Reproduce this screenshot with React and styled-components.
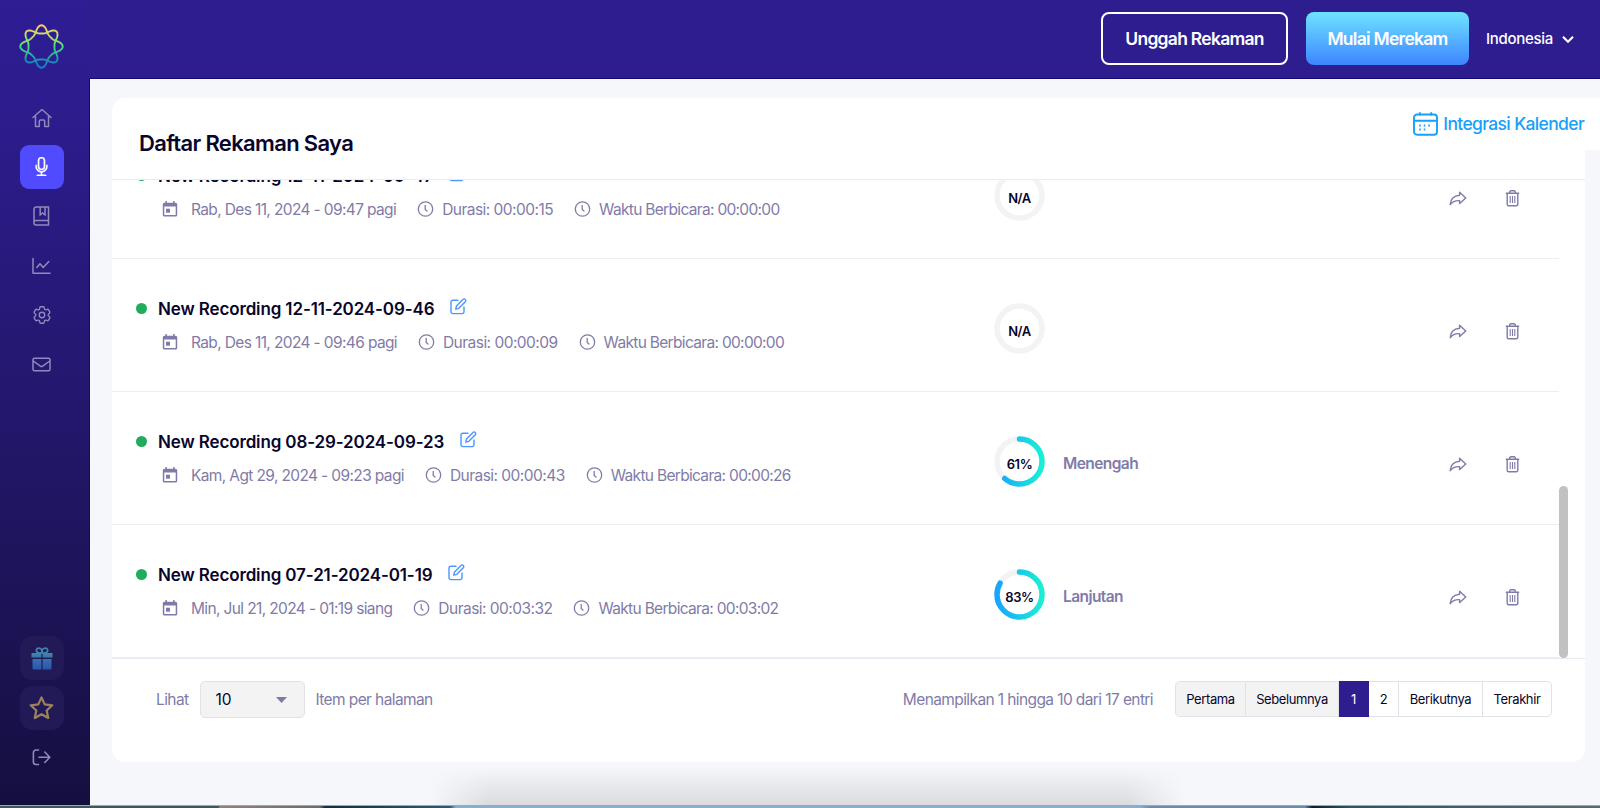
import styled, { createGlobalStyle } from "styled-components";
import { BsMic } from "react-icons/bs";
import { HiOutlineCog6Tooth } from "react-icons/hi2";

const GlobalStyle = createGlobalStyle`
  * {
    box-sizing: border-box;
  }
  body {
    margin: 0;
    overflow: hidden;
    font-family: Inter, "Liberation Sans", sans-serif;
    color: #08052b;
  }
`;

const recordings = [
  { name: "New Recording 12-11-2024-09-47", date: "Rab, Des 11, 2024 - 09:47 pagi", duration: "00:00:15", talk: "00:00:00", score: null },
  { name: "New Recording 12-11-2024-09-46", date: "Rab, Des 11, 2024 - 09:46 pagi", duration: "00:00:09", talk: "00:00:00", score: null },
  { name: "New Recording 08-29-2024-09-23", date: "Kam, Agt 29, 2024 - 09:23 pagi", duration: "00:00:43", talk: "00:00:26", score: 61, level: "Menengah" },
  { name: "New Recording 07-21-2024-01-19", date: "Min, Jul 21, 2024 - 01:19 siang", duration: "00:03:32", talk: "00:03:02", score: 83, level: "Lanjutan" },
];

// four-lobed closed wave around the logo centre, the second harmonic narrows the tips
const wave = (base, amp) => {
  let d = "";
  for (let i = 0; i <= 360; i += 3) {
    const t = (i * Math.PI) / 180;
    const r = base + amp * Math.cos(4 * t) + 0.9 * Math.cos(8 * t);
    d += `${i ? "L" : "M"}${(22.5 + r * Math.sin(t)).toFixed(2)} ${(22.5 - r * Math.cos(t)).toFixed(2)}`;
  }
  return d + "Z";
};

const Logo = () => (
  <svg width="45" height="45" viewBox="0 0 45 45" fill="none">
    <defs>
      <linearGradient id="logo" x1="0" y1="0" x2="0" y2="45" gradientUnits="userSpaceOnUse">
        <stop offset="0" stopColor="#ffc466" />
        <stop offset=".25" stopColor="#c3dc66" />
        <stop offset=".5" stopColor="#4bdc7c" />
        <stop offset=".8" stopColor="#1b8fb0" />
        <stop offset="1" stopColor="#0c7fd0" />
      </linearGradient>
    </defs>
    <g stroke="url(#logo)" strokeWidth="1.9">
      <path d={wave(16.2, 4.1)} />
      <path d={wave(16.2, -4.1)} />
    </g>
  </svg>
);

const HomeIcon = () => (
  <svg width="20" height="20" viewBox="0 0 20 20" fill="none" stroke="currentColor" strokeWidth="1.5" strokeLinecap="round" strokeLinejoin="round">
    <path d="M1 9.500l9-8 9 8M3.500 8v10.500h3.800v-5.300a1.200 1.200 0 0 1 1.200-1.200h3a1.200 1.200 0 0 1 1.200 1.200v5.300h3.800V8" />
  </svg>
);

const ChartIcon = () => (
  <svg width="19" height="18" viewBox="0 0 19 18" fill="none" stroke="currentColor" strokeWidth="1.5" strokeLinecap="round" strokeLinejoin="round">
    <path d="M1 1.500v14.800h17M4.800 10.500l3.200-3.800 3.200 3.800 5.600-6" />
  </svg>
);

const MailIcon = () => (
  <svg width="19" height="15" viewBox="0 0 19 15" fill="none" stroke="currentColor" strokeWidth="1.5" strokeLinejoin="round">
    <rect x="1" y="1.200" width="17" height="12.500" rx="1.500" />
    <path d="M1.200 4l7.200 5.200a2 2 0 0 0 2.200 0L17.800 4" />
  </svg>
);

const BookIcon = () => (
  <svg width="17" height="20" viewBox="0 0 17 20" fill="none" stroke="currentColor" strokeWidth="1.5">
    <path d="M15.500 1H3.200A2.200 2.200 0 0 0 1 3.200V17a2 2 0 0 0 2 2h12.500zM1 16.500a2 2 0 0 1 2-2h12.500M7.200 1v8l2.400-2 2.400 2V1" />
  </svg>
);

const GiftIcon = () => (
  <svg width="22" height="23" viewBox="0 0 22 23">
    <defs>
      <linearGradient id="gift" x1="0" y1="0" x2="0" y2="1">
        <stop offset="0" stopColor="#3f84ae" />
        <stop offset="1" stopColor="#2b53ae" />
      </linearGradient>
    </defs>
    <path d="M.5 6h21v4.600H11.600V6h-1.200v4.600H.5zM1.500 12h8.900v10.500H2.700a1.200 1.200 0 0 1-1.200-1.200zM11.600 12h8.900v9.300a1.200 1.200 0 0 1-1.200 1.200h-7.700z" fill="url(#gift)" />
    <path d="M10.800 6.200C6 6.400 5 4.700 5.400 3 6 .6 9.700.6 10.800 3.200L11 6.200l.2-3C12.300.6 16 .6 16.600 3c.4 1.700-.6 3.400-5.400 3.200" fill="none" stroke="#3f84ae" strokeWidth="1.8" />
  </svg>
);

const StarIcon = () => (
  <svg width="25" height="24" viewBox="0 0 25 24" fill="none" stroke="#9b835b" strokeWidth="2.2" strokeLinejoin="round">
    <path d="M12.500 1.400l3.200 7 7.600.9-5.600 5.200 1.500 7.500-6.700-3.700L5.800 22l1.500-7.500L1.700 9.300l7.600-.9z" />
  </svg>
);

const LogoutIcon = () => (
  <svg width="19" height="17" viewBox="0 0 19 17" fill="none" stroke="currentColor" strokeWidth="1.6" strokeLinecap="round" strokeLinejoin="round">
    <path d="M6.500 1H4a2.600 2.600 0 0 0-2.600 2.600v9.300A2.600 2.600 0 0 0 4 15.500h2.500M7 8.300h10.500M12.800 3l5 5.300-5 5.200" />
  </svg>
);

const EditIcon = () => (
  <svg width="17" height="17" viewBox="0 0 17 17" fill="none" stroke="#4a97ff" strokeWidth="1.4" strokeLinejoin="round" strokeLinecap="round">
    <path d="M8 2.300H2.800A1.800 1.800 0 0 0 1 4.100v9.700a1.800 1.800 0 0 0 1.800 1.800h9.400a1.800 1.800 0 0 0 1.800-1.800V9" />
    <path d="M5.800 11.200l.7-3.200L13 1.400a1.500 1.500 0 0 1 2.200 0l.1.100a1.500 1.500 0 0 1 0 2.200L8.800 10.300z" />
  </svg>
);

const DateIcon = () => (
  <svg width="16" height="17" viewBox="0 0 16 17" fill="#7f7ba9">
    <path fillRule="evenodd" d="M3.400 0h1.500v1.700h6.200V0h1.500v1.700h1A1.600 1.600 0 0 1 15.200 3.300v10.600a1.600 1.600 0 0 1-1.600 1.600H2.400A1.600 1.600 0 0 1 .8 13.900V3.300a1.600 1.600 0 0 1 1.600-1.600h1zM2.300 5.500V14h11.400V5.500z" />
    <path d="M4 7.700h4v4H4z" />
  </svg>
);

const ClockIcon = () => (
  <svg width="17" height="17" viewBox="0 0 17 17" fill="none" stroke="#7f7ba9" strokeWidth="1.3" strokeLinecap="round">
    <circle cx="8.500" cy="8" r="7.200" />
    <path d="M8.200 4.300v4.200l1.800 1.500" />
  </svg>
);

const ShareIcon = () => (
  <svg width="18" height="16" viewBox="0 0 18 16" fill="none" stroke="#7f7ba9" strokeWidth="1.4" strokeLinejoin="round">
    <path d="M10.600 1.300l6.200 5.600-6.200 5.600V9.600C6 9.400 3.500 10.300 1.200 13.700 1.500 8.500 4.500 4.800 10.600 4.300z" />
  </svg>
);

const TrashIcon = () => (
  <svg width="15" height="17" viewBox="0 0 15 17" fill="none" stroke="#7f7ba9" strokeWidth="1.4">
    <path d="M.8 3.200h13.400M4.700 3V2a1.200 1.200 0 0 1 1.200-1.200h3.200A1.200 1.200 0 0 1 10.300 2v1M2.200 3.200v11a1.600 1.600 0 0 0 1.600 1.600h7.400a1.600 1.600 0 0 0 1.600-1.600v-11" />
    <path d="M5.200 6v7M7.500 6v7M9.800 6v7" strokeWidth="1.1" />
  </svg>
);

const CalendarIcon = () => (
  <svg width="25" height="24" viewBox="0 0 25 24" fill="none" stroke="#17a0fb" strokeWidth="1.9">
    <rect x="1" y="2.500" width="23" height="20.300" rx="3" />
    <path d="M1 8.700h23M6.800.3v3.200M18.200.3v3.200" />
    <path d="M6.200 13.500h1.600M10.700 13.500h1.600M15.200 13.500h1.600M6.200 17.500h1.600M10.700 17.500h1.600" />
  </svg>
);

const Score = ({ value }) => {
  const length = 2 * Math.PI * 22.5;
  return (
    <Ring>
      <svg width="51" height="51" viewBox="0 0 51 51" fill="none" strokeWidth="5.5">
        <defs>
          <linearGradient id="score" x1="0" y1="0" x2="1" y2="0">
            <stop offset="0" stopColor="#17a5ff" />
            <stop offset="1" stopColor="#1beed6" />
          </linearGradient>
        </defs>
        <circle cx="25.500" cy="25.500" r="22.500" stroke="#f3f3f3" />
        {value && (
          <path
            d="M25.500 3a22.500 22.500 0 0 1 0 45a22.500 22.500 0 0 1 0-45"
            stroke="url(#score)"
            strokeLinecap="round"
            strokeDasharray={`${(length * value) / 100} ${length}`}
          />
        )}
      </svg>
      <span>{value ? `${value}%` : "N/A"}</span>
    </Ring>
  );
};

const Recording = ({ item }) => (
  <Row>
    <Info>
      <NameLine>
        <Dot />
        <Name>{item.name}</Name>
        <EditIcon />
      </NameLine>
      <Meta>
        <DateIcon />
        <MetaText $gap={13} $spacing={-0.63}>{item.date}</MetaText>
        <ClockIcon />
        <MetaText $gap={8} $spacing={-0.53}>Durasi: {item.duration}</MetaText>
        <ClockIcon />
        <MetaText $gap={8} $spacing={-0.68}>Waktu Berbicara: {item.talk}</MetaText>
      </Meta>
    </Info>
    <Score value={item.score} />
    <Level>{item.level}</Level>
    <Actions>
      <ShareIcon />
      <TrashIcon />
    </Actions>
  </Row>
);

const App = () => (
  <>
    <GlobalStyle />
    <Screen>
      <Window>
        <Sidebar>
          <LogoBox><Logo /></LogoBox>
          <Nav>
            <NavItem><HomeIcon /></NavItem>
            <NavItem $active><BsMic size={19} stroke="currentColor" strokeWidth={0.4} /></NavItem>
            <NavItem><BookIcon /></NavItem>
            <NavItem><ChartIcon /></NavItem>
            <NavItem><HiOutlineCog6Tooth size={22} /></NavItem>
            <NavItem><MailIcon /></NavItem>
          </Nav>
          <Nav>
            <NavItem $soft><GiftIcon /></NavItem>
            <NavItem $soft><StarIcon /></NavItem>
            <NavItem><LogoutIcon /></NavItem>
          </Nav>
        </Sidebar>
        <Main>
          <Header>
            <UploadButton>Unggah Rekaman</UploadButton>
            <RecordButton>Mulai Merekam</RecordButton>
            <Language>
              Indonesia
              <svg width="12" height="8" viewBox="0 0 12 8" fill="none" stroke="#fff" strokeWidth="2.2">
                <path d="M1 1.700l5 5 5-5" />
              </svg>
            </Language>
          </Header>
          <Content>
            <Card>
              <CardHead>
                <Title>Daftar Rekaman Saya</Title>
                <CalendarLink>
                  <CalendarIcon />
                  Integrasi Kalender
                </CalendarLink>
              </CardHead>
              <ListWrap>
                <List>
                  {recordings.map((item) => (
                    <Recording key={item.name} item={item} />
                  ))}
                </List>
                <Track><Thumb /></Track>
              </ListWrap>
              <Footer>
                <FootText>Lihat</FootText>
                <Select>
                  10
                  <svg width="11" height="6" viewBox="0 0 11 6" fill="#7f7ba9"><path d="M0 0h11L5.500 6z" /></svg>
                </Select>
                <FootText>Item per halaman</FootText>
                <Total>Menampilkan 1 hingga 10 dari 17 entri</Total>
                <Pages>
                  <Page $width={71} $disabled>Pertama</Page>
                  <Page $width={93} $disabled>Sebelumnya</Page>
                  <Page $width={30} $current>1</Page>
                  <Page $width={30}>2</Page>
                  <Page $width={84}>Berikutnya</Page>
                  <Page $width={69}>Terakhir</Page>
                </Pages>
              </Footer>
            </Card>
            <DockShadow />
          </Content>
        </Main>
      </Window>
      <Desktop />
    </Screen>
  </>
);

export default App;

const Screen = styled.div`
  width: 1600px;
  height: 808px;
  display: flex;
  flex-direction: column;
  overflow: hidden;
`;

const Window = styled.div`
  height: 805px;
  flex: none;
  display: flex;
`;

const Desktop = styled.div`
  flex: 1;
  border-top: 1px solid #a3a7aa;
  background: linear-gradient(90deg, #40585b 0, #40585b 218px, #8d8480 220px, #6d6b6c 320px, #14303b 325px, #2e5a6c 450px, #85b0cf 456px, #85b0cf 1140px, #6f8ba8 1150px, #6f8ba8 1305px, #0d1e28 1312px, #2f5560 1350px, #5c6a70 1600px);
`;

const Sidebar = styled.aside`
  width: 89px;
  flex: none;
  display: flex;
  flex-direction: column;
  align-items: center;
  padding-bottom: 26px;
  background: linear-gradient(180deg, #2e1d93 0%, #2c1c8c 15%, #1b1354 78%, #150f40 100%);
`;

const LogoBox = styled.div`
  height: 95.5px;
  flex: none;
  padding: 24px 0 0 5px;
  margin-right: 12px;
`;

const Nav = styled.nav`
  display: flex;
  flex-direction: column;
  gap: 5.4px;
  padding-right: 6px;

  & + & {
    margin-top: auto;
  }
`;

const NavItem = styled.div`
  width: 44px;
  height: 44px;
  display: flex;
  align-items: center;
  justify-content: center;
  border-radius: ${({ $soft }) => ($soft ? "13px" : "9px")};
  color: ${({ $active }) => ($active ? "#fff" : "#9089bb")};
  background: ${({ $active, $soft }) => ($active ? "#504bff" : $soft ? "#221a57" : "none")};
`;

const Main = styled.main`
  flex: 1;
  display: flex;
  flex-direction: column;
`;

const Header = styled.header`
  height: 79px;
  flex: none;
  display: flex;
  align-items: flex-start;
  justify-content: flex-end;
  padding: 12px 26px 0 0;
  background: #2e1d8f;
  border-bottom: 1px solid #110879;
`;

const UploadButton = styled.div`
  width: 187px;
  height: 53px;
  display: flex;
  align-items: center;
  justify-content: center;
  border: 2px solid #fff;
  border-radius: 8px;
  color: #fff;
  font-size: 17.5px;
  font-weight: 600;
  letter-spacing: -0.73px;
`;

const RecordButton = styled(UploadButton)`
  width: 163px;
  margin-left: 18px;
  border: 0;
  background: linear-gradient(180deg, #6fe3ff 0%, #3d85ff 100%);
`;

const Language = styled.div`
  height: 53px;
  display: flex;
  align-items: center;
  gap: 9px;
  margin-left: 17px;
  color: #fff;
  font-size: 15px;
  font-weight: 500;
  letter-spacing: -0.3px;
`;

const Content = styled.div`
  position: relative;
  flex: 1;
  padding: 19px 15px 0 22px;
  border-left: 1px solid #110879;
  background: #f6f7fa;
`;

const Card = styled.section`
  height: 664px;
  display: flex;
  flex-direction: column;
  background: #fff;
  border-radius: 13px;
`;

const CardHead = styled.div`
  height: 82px;
  flex: none;
  display: flex;
  align-items: flex-start;
  justify-content: space-between;
  border-bottom: 1px solid #ececf0;
`;

const Title = styled.h1`
  margin: 31px 0 0 27px;
  font-size: 22px;
  line-height: 28px;
  font-weight: 600;
  letter-spacing: -0.66px;
`;

const CalendarLink = styled.div`
  height: 52px;
  display: flex;
  align-items: center;
  gap: 5px;
  margin-right: -15px;
  padding: 0 16px 1px 0;
  background: #fff;
  color: #17a0fb;
  font-size: 17.5px;
  font-weight: 500;
  letter-spacing: -0.65px;
`;

const ListWrap = styled.div`
  height: 479px;
  flex: none;
  display: flex;
  border-bottom: 1px solid #e9e9f1;
`;

const List = styled.div`
  width: 1447px;
  flex: none;
  display: flex;
  flex-direction: column;
  justify-content: flex-end;
  overflow: hidden;
`;

const Track = styled.div`
  width: 9px;
  display: flex;
  align-items: flex-end;
`;

const Thumb = styled.div`
  width: 9px;
  height: 172px;
  border-radius: 5px;
  background: #c1c1c1;
`;

const Row = styled.div`
  height: 133px;
  flex: none;
  display: flex;
  align-items: center;
  border-bottom: 1px solid #ededf3;
`;

const Info = styled.div`
  width: 882px;
  padding: 0 0 1px 24px;
`;

const NameLine = styled.div`
  height: 24px;
  display: flex;
  align-items: center;

  svg {
    margin: -4px 0 0 16px;
  }
`;

const Dot = styled.i`
  width: 11px;
  height: 11px;
  margin-right: 11px;
  border-radius: 50%;
  background: #20ac5d;
`;

const Name = styled.span`
  font-size: 17px;
  font-weight: 600;
  letter-spacing: -0.13px;
`;

const Meta = styled.div`
  height: 20px;
  display: flex;
  align-items: center;
  margin: 12px 0 0 26px;
  color: #7f7ba9;
`;

const MetaText = styled.span`
  margin: 0 21px 0 ${({ $gap }) => $gap}px;
  font-size: 15.5px;
  letter-spacing: ${({ $spacing }) => $spacing}px;
  white-space: nowrap;
`;

const Ring = styled.div`
  display: grid;
  width: 51px;
  height: 51px;
  margin-top: 7px;
  place-items: center;

  & > * {
    grid-area: 1 / 1;
  }
  span {
    padding-top: 4px;
    font-size: 13px;
    font-weight: 600;
    letter-spacing: -0.4px;
  }
`;

const Level = styled.span`
  margin: 11px 0 0 18px;
  color: #7f7ba9;
  font-size: 15.5px;
  font-weight: 600;
  letter-spacing: -0.58px;
`;

const Actions = styled.div`
  display: flex;
  align-items: center;
  gap: 38px;
  margin: 13px 39px 0 auto;
`;

const Footer = styled.div`
  flex: 1;
  display: flex;
  align-items: flex-start;
  padding: 22px 33px 0 44px;
`;

const FootText = styled.span`
  color: #7f7ba9;
  font-size: 15.5px;
  line-height: 37px;
  letter-spacing: -0.6px;
`;

const Select = styled.div`
  width: 105px;
  height: 37px;
  display: flex;
  align-items: center;
  justify-content: space-between;
  margin: 0 10px 0 12px;
  padding: 0 17px 0 14px;
  border: 1px solid #e2e2e6;
  border-radius: 5px;
  background: #f3f3f3;
  color: #08052b;
  font-size: 15.5px;
`;

const Total = styled(FootText)`
  margin-left: auto;
`;

const Pages = styled.div`
  display: flex;
  margin-left: 22px;
`;

const Page = styled.span`
  width: ${({ $width }) => $width}px;
  height: 36px;
  display: flex;
  align-items: center;
  justify-content: center;
  border: 1px solid ${({ $current }) => ($current ? "#2e1d8f" : "#dfe2e8")};
  border-left-width: 0;
  font-size: 13px;
  letter-spacing: -0.4px;
  color: ${({ $current }) => ($current ? "#fff" : "#08052b")};
  background: ${({ $current, $disabled }) => ($current ? "#2e1d8f" : $disabled ? "#f3f3f3" : "#fff")};

  &:first-child {
    border-left-width: 1px;
    border-radius: 5px 0 0 5px;
  }
  &:last-child {
    border-radius: 0 5px 5px 0;
  }
`;

/* soft shade above the dock at the bottom edge */
const DockShadow = styled.div`
  position: absolute;
  left: 340px;
  right: 415px;
  bottom: 0;
  height: 38px;
  background: linear-gradient(180deg, rgba(0, 0, 0, 0) 0%, rgba(0, 0, 0, 0.05) 45%, rgba(0, 0, 0, 0.11) 100%);
  mask-image: linear-gradient(90deg, transparent, #000 60px, #000 calc(100% - 60px), transparent);
`;
